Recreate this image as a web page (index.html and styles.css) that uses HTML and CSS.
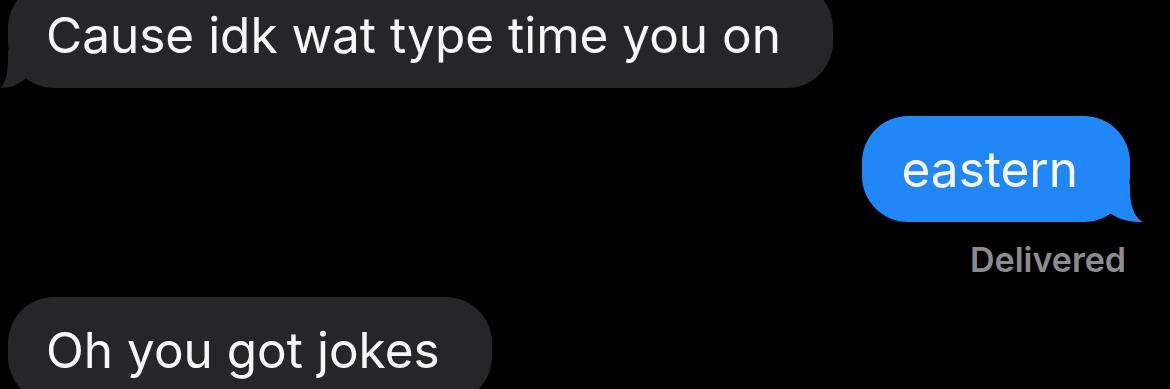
FILE: index.html
```html
<!DOCTYPE html>
<html>
<head>
<meta charset="utf-8">
<link rel="stylesheet" href="styles.css">
</head>
<body>
<div class="thread">
  <div class="bubble received first">
    <span class="text">Cause idk wat type time you on</span>
    <svg class="tail tail-left" width="40" height="40" viewBox="0 0 40 40"><path d="M8 2 Q9 33 0 40 Q16 40 26 30 L30 5 Z" fill="#262629"/></svg>
  </div>
  <div class="bubble sent">
    <span class="text">eastern</span>
    <svg class="tail tail-right" width="40" height="40" viewBox="0 0 40 40"><path d="M27 2 Q26 33 40 40 Q20 41 5 30 L5 5 Z" fill="#2186f6"/></svg>
  </div>
  <div class="status">Delivered</div>
  <div class="bubble received last">
    <span class="text">Oh you got jokes</span>
  </div>
</div>
</body>
</html>
```
FILE: styles.css
```css
html, body {
  margin: 0;
  padding: 0;
  background: #000;
  height: 389px;
  overflow: hidden;
}
.thread {
  display: flex;
  flex-direction: column;
  font-family: Inter, "Noto Sans", sans-serif;
  color: #f7f7f7;
}
.bubble {
  position: relative;
  box-sizing: border-box;
  height: 106px;
  padding: 0 52px 0 38px;
  border-radius: 46px;
  display: flex;
  align-items: center;
  font-size: 49.5px;
  line-height: 52px;
  letter-spacing: 0;
}
.received {
  align-self: flex-start;
  margin-left: 8px;
  background: #262629;
}
.first {
  margin-top: -18px;
}
.sent {
  align-self: flex-end;
  margin-right: 40px;
  margin-top: 28px;
  background: #2186f6;
  padding: 0 52px 0 40px;
}
.tail {
  position: absolute;
  bottom: 0;
}
.tail-left {
  left: -8px;
}
.tail-right {
  right: -13px;
}
.status {
  align-self: flex-end;
  margin-right: 44px;
  margin-top: 18px;
  font-size: 34px;
  line-height: 40px;
  font-weight: 600;
  color: #8c8c90;
}
.last {
  margin-top: 17px;
}
```
